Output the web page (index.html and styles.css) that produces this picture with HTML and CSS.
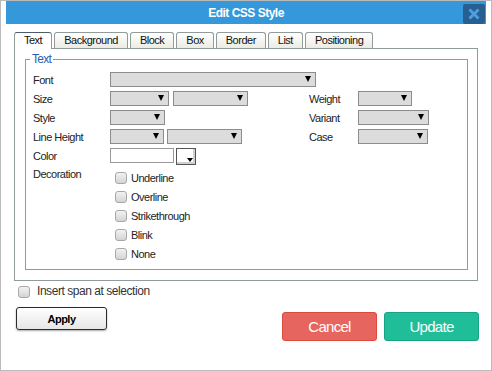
FILE: index.html
```html
<!DOCTYPE html>
<html lang="en">

<head>
    <meta charset="UTF-8">
    <title>Edit CSS Style</title>
    <link rel="stylesheet" href="styles.css">
</head>

<body>
    <div class="dialog">
        <div class="title-bar">
            <span class="title">Edit CSS Style</span>
            <button class="close-btn" aria-label="Close">
                <svg width="12" height="12" viewBox="0 0 12 12">
                    <path d="M1.5 1.5 L10.5 10.5 M10.5 1.5 L1.5 10.5" stroke="#4c9ede" stroke-width="3" fill="none" />
                </svg>
            </button>
        </div>

        <div class="tabs">
            <div class="tab active">Text</div>
            <div class="tab">Background</div>
            <div class="tab">Block</div>
            <div class="tab">Box</div>
            <div class="tab">Border</div>
            <div class="tab">List</div>
            <div class="tab">Positioning</div>
        </div>

        <div class="panel">
            <fieldset class="group">
                <legend>Text</legend>
                <div class="form">
                    <label>Font</label>
                    <div class="span-all"><span class="select w-font"></span></div>

                    <label>Size</label>
                    <div class="pair"><span class="select w-59"></span><span class="select w-75"></span></div>
                    <label>Weight</label>
                    <div><span class="select w-54"></span></div>

                    <label>Style</label>
                    <div><span class="select w-55"></span></div>
                    <label>Variant</label>
                    <div><span class="select w-71"></span></div>

                    <label>Line Height</label>
                    <div class="pair tight"><span class="select w-54"></span><span class="select w-75"></span></div>
                    <label>Case</label>
                    <div><span class="select w-70"></span></div>

                    <label>Color</label>
                    <div class="span-all color-row">
                        <span class="color-input"></span>
                        <span class="color-btn"></span>
                    </div>

                    <label class="top">Decoration</label>
                    <div class="span-all checks">
                        <div class="check"><span class="box"></span>Underline</div>
                        <div class="check"><span class="box"></span>Overline</div>
                        <div class="check"><span class="box"></span>Strikethrough</div>
                        <div class="check"><span class="box"></span>Blink</div>
                        <div class="check"><span class="box"></span>None</div>
                    </div>
                </div>
            </fieldset>
        </div>

        <div class="insert-row"><span class="box"></span>Insert span at selection</div>

        <div class="footer">
            <button class="apply-btn">Apply</button>
            <div class="actions">
                <button class="btn cancel">Cancel</button>
                <button class="btn update">Update</button>
            </div>
        </div>
    </div>
</body>

</html>
```

FILE: styles.css
```css
body {
    margin: 0;
    font-family: 'Liberation Sans', Arial, sans-serif;
    background-color: #fff;
}

.dialog {
    box-sizing: border-box;
    width: 492px;
    height: 371px;
    border: 1px solid #bbb;
    background-color: #fff;
}

.title-bar {
    display: grid;
    grid-template-columns: 1fr auto 1fr;
    align-items: center;
    height: 23px;
    margin: 0 5px;
    background-color: #3498db;
}

.title {
    grid-column: 2;
    color: #fff;
    font-size: 12px;
    font-weight: bold;
    letter-spacing: -0.5px;
}

.close-btn {
    grid-column: 3;
    justify-self: end;
    display: flex;
    align-items: center;
    justify-content: center;
    width: 22px;
    height: 20px;
    margin: 2px 1px 0 0;
    padding: 0;
    border: none;
    border-radius: 2px;
    background-color: #285f92;
}

/* Tabs */
.tabs {
    display: flex;
    gap: 2px;
    margin-top: 8px;
    padding-left: 13px;
    margin-bottom: -1px;
    position: relative;
}

.tab {
    height: 15px;
    line-height: 15px;
    padding: 0 9px;
    border: 1px solid #919b9c;
    border-bottom: none;
    border-radius: 3px 3px 0 0;
    font-size: 11px;
    letter-spacing: -0.5px;
    color: #111;
    background: linear-gradient(#fff, #ecebe3);
}

.tab.active {
    height: 16px;
    border-top-color: #4d5d6c;
    background: #fff;
}

.panel {
    margin: 0 13px 0 13px;
    padding: 4px 9px 10px 10px;
    border: 1px solid #919b9c;
}

.group {
    margin: 0;
    padding: 0 8px 5px 4px;
    border: 1px solid #919b9c;
    min-inline-size: 0;
}

.group legend {
    padding: 0 2px;
    font-size: 12px;
    line-height: 13px;
    letter-spacing: -0.7px;
    color: #2a5db0;
}

.form {
    display: grid;
    grid-template-columns: 77px 199px 49px auto;
    grid-template-rows: repeat(5, 19px) auto;
    align-items: center;
    margin-top: 4px;
    margin-left: 3px;
    font-size: 11px;
    letter-spacing: -0.5px;
    color: #222;
}

.form label.top {
    align-self: start;
    line-height: 19px;
}

.span-all {
    grid-column: 2 / 5;
}

.pair {
    display: flex;
    gap: 4px;
}

.pair.tight {
    gap: 3px;
}

.form > div {
    display: flex;
}

.select {
    box-sizing: border-box;
    position: relative;
    display: block;
    height: 15px;
    border: 1px solid #8c8c8c;
    background-color: #dcdcdc;
}

.select::after {
    content: '';
    position: absolute;
    right: 4px;
    top: 3px;
    border-left: 3px solid transparent;
    border-right: 3px solid transparent;
    border-top: 6px solid #000;
}

.w-font { width: 206px; }
.w-59 { width: 59px; }
.w-75 { width: 75px; }
.w-54 { width: 54px; }
.w-55 { width: 55px; }
.w-71 { width: 71px; }
.w-70 { width: 70px; }

.color-row {
    align-self: start;
    margin-top: 2px;
    gap: 2px;
}

.color-input {
    box-sizing: border-box;
    width: 64px;
    height: 15px;
    border: 1px solid #999;
    background-color: #fff;
}

.color-btn {
    box-sizing: border-box;
    position: relative;
    width: 20px;
    height: 17px;
    border: 1px solid #555;
    background-color: #fff;
    box-shadow: inset -2px -2px 0 #cfcfcf;
}

.color-btn::after {
    content: '';
    position: absolute;
    right: 2px;
    bottom: 2px;
    border-left: 3px solid transparent;
    border-right: 3px solid transparent;
    border-top: 4px solid #000;
}

.checks {
    flex-direction: column;
    align-self: start;
    padding: 4px 0 0 5px;
}

.check {
    display: flex;
    height: 19px;
    line-height: 19px;
}

.box {
    box-sizing: border-box;
    width: 12px;
    height: 12px;
    margin: 3px 4px 0 0;
    border: 1px solid #a8a8a8;
    border-radius: 3px;
    background: linear-gradient(#f2f2f2, #d4d4d4);
}

.insert-row {
    display: flex;
    height: 19px;
    line-height: 19px;
    margin-top: 1px;
    padding-left: 17px;
    font-size: 12px;
    letter-spacing: -0.45px;
    color: #333;
}

.insert-row .box {
    margin: 4px 7px 0 0;
}

.footer {
    display: flex;
    justify-content: space-between;
    align-items: flex-start;
    margin-top: 6px;
    padding: 0 12px 0 15px;
}

.apply-btn {
    width: 91px;
    height: 23px;
    padding: 0;
    border: 1px solid #2b2b2b;
    border-radius: 3px;
    background: linear-gradient(#fff, #e6e6e6);
    box-shadow: 0 1px 2px #aaa;
    font-family: 'Liberation Sans', Arial, sans-serif;
    font-size: 11px;
    font-weight: bold;
    letter-spacing: -0.5px;
    color: #000;
}

.actions {
    display: flex;
    gap: 7px;
    margin-top: 5px;
}

.btn {
    width: 95px;
    height: 29px;
    padding: 0;
    border: 1px solid;
    border-radius: 3px;
    font-family: 'Liberation Sans', Arial, sans-serif;
    font-size: 15px;
    letter-spacing: -0.7px;
    color: #fff;
}

.cancel {
    background-color: #e6665f;
    border-color: #dc4a3e;
}

.update {
    background-color: #1fbe99;
    border-color: #17a386;
}
```
